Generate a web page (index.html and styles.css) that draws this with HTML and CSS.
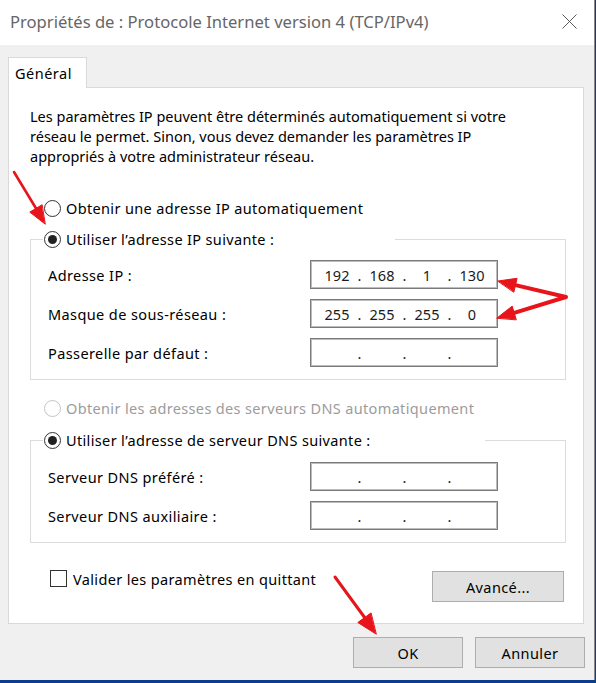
FILE: index.html
```html
<!DOCTYPE html>
<html lang="fr">
<head>
<meta charset="utf-8">
<title>Propriétés de : Protocole Internet version 4 (TCP/IPv4)</title>
<link rel="stylesheet" href="styles.css">
</head>
<body>
<div class="window">
  <header class="titlebar">
    <span class="title">Propriétés de : Protocole Internet version 4 (TCP/IPv4)</span>
    <span class="close"><svg width="15" height="15" viewBox="0 0 15 15"><path d="M0.5 0.5L14.5 14.5M14.5 0.5L0.5 14.5" stroke="#5a5a5a" stroke-width="1"/></svg></span>
  </header>
  <main class="content">
    <div class="tabs"><div class="tab">Général</div></div>
    <section class="panel">
      <p class="intro">Les paramètres IP peuvent être déterminés automatiquement si votre<br>réseau le permet. Sinon, vous devez demander les paramètres IP<br>appropriés à votre administrateur réseau.</p>
      <div class="option"><span class="radio"></span>Obtenir une adresse IP automatiquement</div>
      <fieldset class="group group-ip">
        <legend class="option legend legend-ip"><span class="radio checked"></span>Utiliser l’adresse IP suivante :</legend>
        <div class="fields">
          <span class="flabel">Adresse IP :</span>
          <div class="ipbox"><span class="seg">192</span><span class="dot">.</span><span class="seg">168</span><span class="dot">.</span><span class="seg">1</span><span class="dot">.</span><span class="seg">130</span></div>
          <span class="flabel">Masque de sous-réseau :</span>
          <div class="ipbox"><span class="seg">255</span><span class="dot">.</span><span class="seg">255</span><span class="dot">.</span><span class="seg">255</span><span class="dot">.</span><span class="seg">0</span></div>
          <span class="flabel">Passerelle par défaut :</span>
          <div class="ipbox"><span class="seg"></span><span class="dot">.</span><span class="seg"></span><span class="dot">.</span><span class="seg"></span><span class="dot">.</span><span class="seg"></span></div>
        </div>
      </fieldset>
      <div class="option option-dns disabled"><span class="radio"></span>Obtenir les adresses des serveurs DNS automatiquement</div>
      <fieldset class="group group-dns">
        <legend class="option legend legend-dns"><span class="radio checked"></span>Utiliser l’adresse de serveur DNS suivante :</legend>
        <div class="fields">
          <span class="flabel">Serveur DNS préféré :</span>
          <div class="ipbox"><span class="seg"></span><span class="dot">.</span><span class="seg"></span><span class="dot">.</span><span class="seg"></span><span class="dot">.</span><span class="seg"></span></div>
          <span class="flabel">Serveur DNS auxiliaire :</span>
          <div class="ipbox"><span class="seg"></span><span class="dot">.</span><span class="seg"></span><span class="dot">.</span><span class="seg"></span><span class="dot">.</span><span class="seg"></span></div>
        </div>
      </fieldset>
      <div class="panel-bottom">
        <div class="check-row"><span class="checkbox"></span>Valider les paramètres en quittant</div>
        <button class="btn btn-adv" type="button">Avancé...</button>
      </div>
    </section>
    <footer class="footer">
      <button class="btn btn-main" type="button">OK</button>
      <button class="btn btn-main" type="button">Annuler</button>
    </footer>
  </main>
  <svg class="arrows" width="596" height="683" viewBox="0 0 596 683">
    <g fill="#e8141b" stroke="#e8141b" stroke-linejoin="round" stroke-linecap="round">
      <line x1="14" y1="172" x2="37" y2="210" stroke-width="2.6"/>
      <polygon points="45,224 29.8,212.1 41.8,204.9" stroke-width="1"/>
      <polyline points="515.5,285.1 566,297 514.2,312.8" fill="none" stroke-width="4"/>
      <polygon points="498,281 517.1,278.3 513.9,291.9" stroke-width="1"/>
      <polygon points="497,318 512.2,306.1 516.2,319.5" stroke-width="1"/>
      <line x1="335" y1="577" x2="365" y2="618" stroke-width="3"/>
      <polygon points="376,634 357.8,622.5 370.8,613.1" stroke-width="1"/>
    </g>
  </svg>
</div>
<div class="taskbar"></div>
</body>
</html>
```

FILE: styles.css
```css
* { box-sizing: border-box; }
html, body { margin: 0; padding: 0; }
body {
  width: 596px;
  height: 683px;
  overflow: hidden;
  background: #0d3c8e;
  font-family: "Noto Sans", "Open Sans", sans-serif;
  font-size: 14.5px;
  color: #000;
}
.window {
  position: relative;
  width: 595px;
  height: 680px;
  background: #f0f0f0;
  border-right: 1px solid #8a8a8a;
}
.titlebar {
  height: 45px;
  background: #fff;
  display: flex;
  align-items: center;
  justify-content: space-between;
  padding: 0 17px 2px 10px;
}
.title {
  font-size: 16.6px;
  color: #666;
}
.close { display: flex; }
.content {
  padding: 12px 0 0 8px;
}
.tabs { display: flex; }
.tab {
  position: relative;
  z-index: 1;
  width: 79px;
  height: 31px;
  margin-bottom: -1px;
  background: #fff;
  border: 1px solid #d9d9d9;
  border-bottom: none;
  padding-left: 6px;
  line-height: 30px;
  letter-spacing: 0.5px;
}
.panel {
  width: 576px;
  height: 537px;
  background: #fff;
  border: 1px solid #d9d9d9;
  padding: 0 0 0 21px;
}
.intro {
  margin: 18px 0 0 0;
  line-height: 20px;
}
.option {
  display: flex;
  align-items: center;
  height: 30px;
  padding-left: 14px;
  white-space: nowrap;
  letter-spacing: 0.35px;
}
.intro + .option { margin-top: 27px; }
.radio {
  width: 17px;
  height: 17px;
  border: 1px solid #333;
  border-radius: 50%;
  margin-right: 5px;
  display: flex;
  align-items: center;
  justify-content: center;
  background: #fff;
  flex: none;
}
.radio.checked::after {
  content: "";
  width: 9px;
  height: 9px;
  border-radius: 50%;
  background: #222;
}
.disabled { color: #9c9c9c; }
.disabled .radio { border-color: #c4c4c4; }
.group {
  margin: 0;
  width: 536px;
  border: 1px solid #dcdcdc;
  padding: 0 0 12px 0;
  min-inline-size: 0;
}
.legend {
  height: 32px;
  padding: 0 0 0 1px;
  margin-left: 12px;
}
.legend-ip { width: 352px; }
.legend-dns { width: 442px; }
.fields {
  display: grid;
  grid-template-columns: 262px 188px;
  grid-auto-rows: 29px;
  row-gap: 10px;
  padding: 5px 0 0 17px;
}
.group-dns .fields { padding-top: 6px; }
.flabel {
  align-self: center;
  white-space: nowrap;
  letter-spacing: 0.4px;
}
.ipbox {
  display: flex;
  align-items: center;
  border: 1px solid #7a7a7a;
  box-shadow: inset 0 0 0 1px #bdbdbd;
  background: #fff;
  padding-left: 8px;
  color: #1a1a1a;
}
.seg { width: 36px; text-align: center; }
.dot { width: 9px; text-align: center; }
.option-dns { margin-top: 13px; }
.group-dns { margin-top: 1px; }
.panel-bottom {
  display: flex;
  justify-content: space-between;
  align-items: flex-start;
  margin-top: 27px;
  padding: 0 19px 0 20px;
}
.check-row {
  display: flex;
  align-items: center;
  height: 17px;
  white-space: nowrap;
  letter-spacing: 0.35px;
}
.checkbox {
  width: 17px;
  height: 17px;
  border: 1px solid #333;
  background: #fff;
  margin-right: 6px;
}
.btn {
  font-family: inherit;
  font-size: 14.5px;
  color: #000;
  background: #e1e1e1;
  border: 1px solid #adadad;
  height: 31px;
  padding: 0;
  letter-spacing: 0.4px;
}
.btn-adv { width: 132px; margin-top: 1px; }
.footer {
  display: flex;
  justify-content: flex-end;
  gap: 12px;
  padding: 13px 9px 0 0;
}
.btn-main { width: 110px; }
.arrows {
  position: absolute;
  left: 0;
  top: 0;
  pointer-events: none;
}
.taskbar { height: 3px; }
```
